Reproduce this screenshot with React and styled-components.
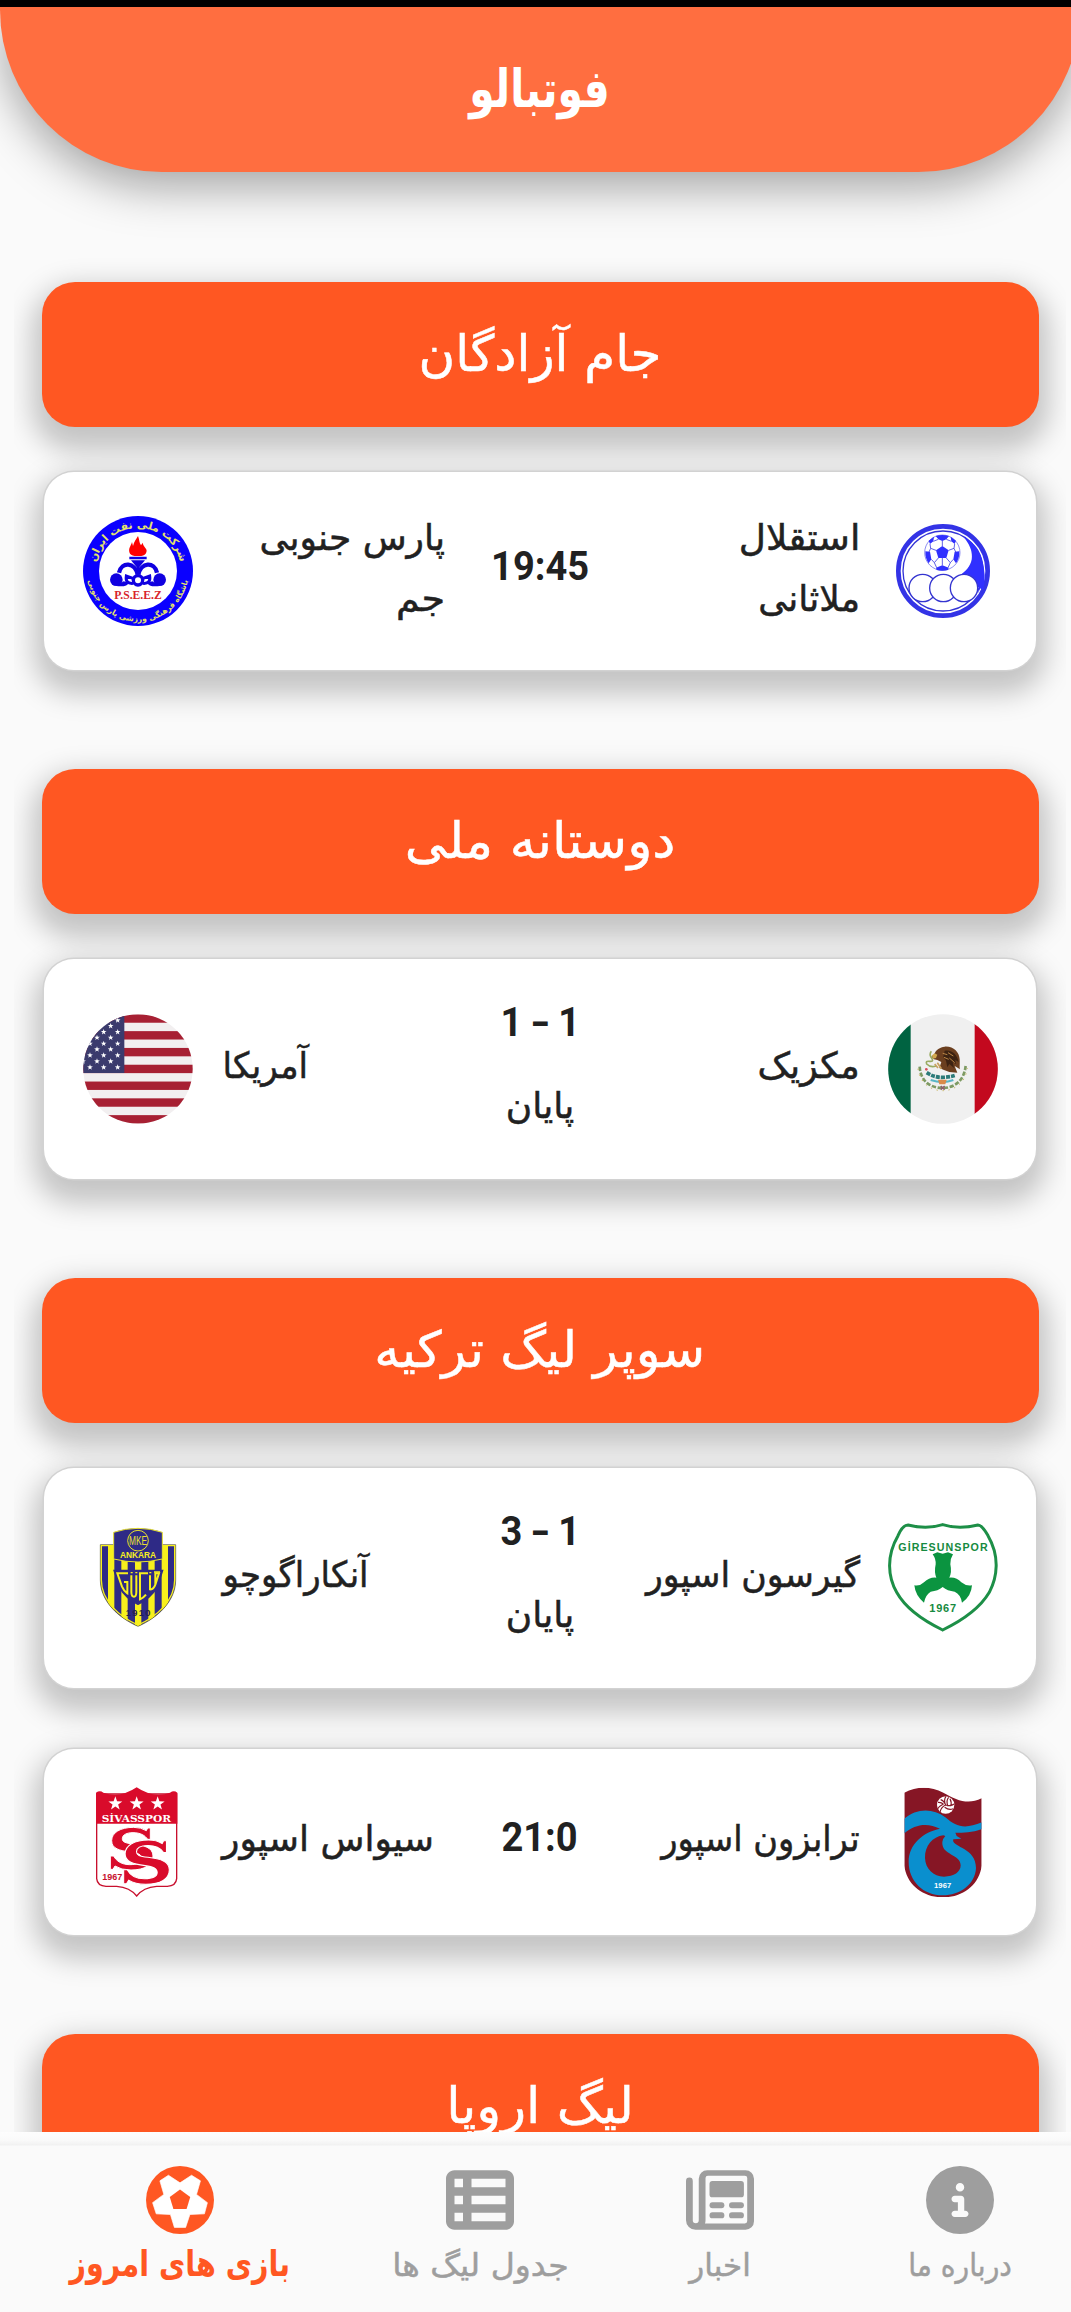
import React from "react";
import styled, { createGlobalStyle } from "styled-components";
import { FaTableList, FaCircleInfo } from "react-icons/fa6";

const persian = `"DejaVu Sans", "Noto Sans", sans-serif`;

const GlobalStyle = createGlobalStyle`
  html, body { margin: 0; padding: 0; background: #fafafa; overflow: hidden; }
  * { box-sizing: border-box; }
`;

const Viewport = styled.div`
  width: 1071px;
  height: 2312px;
  overflow: hidden;
  direction: ltr;
`;

const Screen = styled.div`
  width: 1080px;
  height: 2312px;
  display: grid;
  grid-template-rows: 7px 165px 1960px 180px;
  background: #fafafa;
  font-family: ${persian};
  color: #212121;
`;

const StatusBar = styled.div`
  background: #000;
`;

const AppBar = styled.header`
  position: relative;
  z-index: 1;
  display: flex;
  justify-content: center;
  align-items: center;
  border-radius: 0 0 162px 162px;
  background: #ff6e40;
  box-shadow: 0 16px 46px rgba(0, 0, 0, 0.34);
`;

const Label = styled.span`
  display: block;
  direction: rtl;
  white-space: nowrap;
  font-size: ${(p) => p.$size}px;
  font-weight: ${(p) => (p.$bold ? 700 : 400)};
  -webkit-text-stroke: ${(p) => (p.$bold ? 0 : 0.5)}px currentColor;
  line-height: ${(p) => p.$line || 1.5};
  color: ${(p) => p.$color || "inherit"};
  transform: translateY(${(p) => p.$drop || 0}px) scaleX(${(p) => p.$stretch || 1});
  transform-origin: ${(p) => p.$origin || "center"};
`;

const Matches = styled.main`
  width: 1052px;
  margin-left: 14px;
  padding: 109.5px 27.5px 0 27.5px;
  overflow: hidden;
  display: flex;
  flex-direction: column;
  gap: 99px;
`;

const League = styled.section`
  display: flex;
  flex-direction: column;
  flex: none;
`;

const cardShadow = `0 14px 28px 10px rgba(0, 0, 0, 0.22)`;

const LeagueTitle = styled.h2`
  margin: 0 0 44.5px;
  height: 145.5px;
  display: flex;
  align-items: center;
  justify-content: center;
  border-radius: 33px;
  background: #ff5722;
  color: #fff;
  font-weight: 400;
  box-shadow: ${cardShadow};
`;

const MatchList = styled.div`
  display: flex;
  flex-direction: column;
  gap: 61px;
  padding: 0 2.5px;
`;

const MatchCard = styled.article`
  height: ${(p) => p.$height}px;
  direction: rtl;
  display: grid;
  grid-template-columns: 110px 223px 1fr 223px 110px;
  column-gap: 28.5px;
  align-items: center;
  padding: 0 38px 0 39px;
  border-radius: 30px;
  background: #fff;
  box-shadow: 0 0 0 1.5px #d2d2d2, ${cardShadow};
`;

const Team = styled.div`
  display: flex;
  justify-content: ${(p) => p.$side};
  transform: translateX(0.5px);
`;

const Result = styled.div`
  display: flex;
  flex-direction: column;
  align-items: center;
  gap: ${(p) => (p.$finished ? 18 : 0)}px;
  transform: translate(-0.5px, ${(p) => (p.$finished ? -2.5 : 0)}px);
`;

const Score = styled.span`
  direction: ltr;
  white-space: nowrap;
  font-family: Roboto, sans-serif;
  font-weight: 700;
  font-size: 40px;
  line-height: 60px;
  transform: translateY(-4px) scaleX(0.95);
`;

const Dash = styled.span`
  display: inline-block;
  margin: 0 11px;
  transform: scaleX(1.4);
`;

const Nav = styled.nav`
  display: flex;
  direction: ltr;
  padding-top: 13px;
  background: linear-gradient(#fdfdfd 0, #fafafa 8px, #f1f1f1 13px, #fafafa 14px);
`;

const NavItem = styled.a`
  flex: ${(p) => (p.$active ? 1.5 : 1)} 1 0;
  display: flex;
  flex-direction: column;
  align-items: center;
  padding-top: 21px;
  color: ${(p) => (p.$active ? "#ff5722" : "#9e9e9e")};
  svg { display: block; width: 68px; height: 68px; flex: none; }
`;

const Crest = styled.svg`
  display: block;
  width: 110px;
  height: 110px;
`;

const star = (cx, cy, r) =>
  Array.from({ length: 10 }, (_, i) => {
    const a = (-90 + i * 36) * (Math.PI / 180);
    const q = i % 2 ? r * 0.4 : r;
    return `${(cx + q * Math.cos(a)).toFixed(1)},${(cy + q * Math.sin(a)).toFixed(1)}`;
  }).join(" ");

function FutbolIcon() {
  return (
    <svg viewBox="257 107 206 206">
      <circle cx="360" cy="210" r="103" fill="currentColor" />
      <path fill="#fff" stroke="#fff" strokeWidth="2" strokeLinejoin="round" d="M325 135L360 158L395 135L422 152L410 193L443 218L434 252L390 254L377 293L343 293L331 254L288 252L277 218L311 193L299 152Z" />
      <path fill="currentColor" d="M360 178L391 201L380 237H340L329 201Z" />
    </svg>
  );
}

function NewspaperIcon() {
  return (
    <svg viewBox="0 0 512 512" fill="currentColor">
      <path fillRule="evenodd" d="M160 32H448A64 64 0 0 1 512 96V416A64 64 0 0 1 448 480H72A72 72 0 0 1 0 408V113A25 25 0 0 1 51 113V408A22 22 0 0 0 96 408V96A64 64 0 0 1 160 32ZM165 73A18 18 0 0 0 147 91V408Q147 421 143 432H443A18 18 0 0 0 461 414V91A18 18 0 0 0 443 73Z" />
      <rect x="177" y="113" width="259" height="123" rx="22" />
      <rect x="177" y="273" width="112" height="45" rx="22" />
      <rect x="324" y="273" width="112" height="45" rx="22" />
      <rect x="177" y="349" width="112" height="45" rx="22" />
      <rect x="324" y="349" width="112" height="45" rx="22" />
    </svg>
  );
}

function Esteghlal() {
  return (
    <Crest viewBox="0 0 330 330">
      <circle cx="165" cy="165" r="134" fill="#fff" stroke="#3333e6" strokeWidth="14" />
      <circle cx="165" cy="165" r="120" fill="#fff" stroke="#3333d6" strokeWidth="4" />
      <path fill="#3030ff" d="M226 62C258 94 266 150 218 178L214 184L286 222Q296 180 282 128C272 94 250 74 226 62ZM226 62C262 104 262 146 218 176Q250 174 266 194Q276 206 270 232Q286 204 286 160C284 110 256 74 226 62Z" />
      <path fill="#fff" d="M222 70C256 104 258 148 218 174L200 176V70Z" />
      <g>
        <circle cx="163" cy="110" r="53" fill="#fff" stroke="#5555e8" strokeWidth="2" />
        <path fill="#3030ff" d="M163 90L182 103L175 126H151L144 103Z" />
        <path fill="#3030ff" d="M143 60Q163 54 183 60L175 70L163 75L151 70ZM112 106L126 107L130 130L122 142Q111 126 112 106ZM214 106L200 107L196 130L204 142Q215 126 214 106ZM144 155L163 148L182 155L180 162Q163 166 146 162ZM122 74L138 62L136 76L126 84ZM204 74L188 62L190 76L200 84Z" />
        <path fill="none" stroke="#4040e0" strokeWidth="2.5" d="M163 90V75M182 103L198 97M175 126L187 140M151 126L139 140M144 103L128 97M126 84L128 97L122 110M200 84L198 97L204 110M130 130L139 140L146 155M196 130L187 140L180 155M163 126V148M136 76L151 70M190 76L175 70" />
      </g>
      <g fill="#fff" stroke="#3434d0" strokeWidth="4">
        <circle cx="104" cy="216" r="41" />
        <circle cx="166" cy="216" r="41" />
        <circle cx="228" cy="216" r="41" />
      </g>
    </Crest>
  );
}

function Pseez() {
  return (
    <Crest viewBox="0 0 330 330">
      <defs>
        <path id="ring-top" d="M36 165A129 129 0 0 1 294 165" />
        <path id="ring-bottom" d="M13 165A152 152 0 0 0 317 165" />
      </defs>
      <circle cx="165" cy="165" r="165" fill="#0a00ff" />
      <circle cx="165" cy="165" r="117" fill="#fff" />
      <g fill="#e6e36a" fontFamily={persian} fontWeight="700" textAnchor="middle" direction="rtl">
        <text fontSize="32"><textPath href="#ring-top" startOffset="50%">شرکت ملی نفت ایران</textPath></text>
        <text fontSize="23"><textPath href="#ring-bottom" startOffset="50%">باشگاه فرهنگی ورزشی پارس جنوبی</textPath></text>
      </g>
      <path fill="#f00" d="M141 113C134 98 144 90 147 78L150 90C153 76 160 70 165 60C170 72 168 80 174 88L179 80C180 94 198 98 188 113Q182 121 165 120Q148 121 141 113Z" />
      <path fill="#1000e0" d="M139 122H191V130H139ZM144 133H186L170 152V162H160V152Z" />
      <g fill="none" stroke="#1000e0" strokeWidth="13">
        <path d="M164 176C156 138 116 136 108 170" />
        <path d="M166 176C174 138 214 136 222 170" />
        <circle cx="165" cy="193" r="14" strokeWidth="10" />
        <path d="M178 188L200 180Q204 204 180 202M152 188L130 180Q126 204 150 202" strokeWidth="9" />
      </g>
      <circle cx="100" cy="191" r="19" fill="#1000e0" />
      <circle cx="230" cy="191" r="19" fill="#1000e0" />
      <path fill="#1000e0" d="M100 210Q132 214 138 200L122 196ZM230 210Q198 214 192 200L208 196Z" />
      <text x="165" y="248" textAnchor="middle" fontFamily="Liberation Serif, serif" fontWeight="700" fontSize="36" textLength="142" lengthAdjust="spacingAndGlyphs" fill="#d8232a">P.S.E.E.Z</text>
    </Crest>
  );
}

function Mexico() {
  return (
    <Crest viewBox="84 100 330 330">
      <clipPath id="mx"><circle cx="249" cy="265" r="164.5" /></clipPath>
      <g clipPath="url(#mx)">
        <path fill="#f0f0f0" d="M84 100H414V430H84Z" />
        <path fill="#006341" d="M84 100H152V430H84Z" />
        <path fill="#c3091e" d="M344 100H414V430H344Z" />
      </g>
      <path fill="none" stroke="#7d9a63" strokeWidth="8" strokeDasharray="13 5" d="M179 258C182 305 215 322 248 322C282 322 312 302 317 256" />
      <path fill="none" stroke="#c9b560" strokeWidth="3" strokeDasharray="4 14" d="M174 264C180 310 215 330 248 330C282 330 316 308 322 262" />
      <path fill="#6b3f1f" d="M222 222C228 206 240 200 254 198C280 196 298 214 299 236C300 252 298 260 300 266L284 256L292 276L268 274L252 268L238 262L244 244L232 238L222 236L214 228Z" />
      <path fill="#3d2312" d="M254 210C276 206 292 222 296 244L286 238L288 250L278 244L282 262L268 250L262 260L258 240L250 228Z" />
      <path fill="none" stroke="#b98545" strokeWidth="3" d="M248 218L262 222M252 230L266 236M264 216L280 226M268 232L284 246" />
      <path fill="#d2a94e" d="M216 224L224 218L232 222L228 232L218 234Z" />
      <path fill="none" stroke="#9aab62" strokeWidth="5" d="M214 212Q206 222 216 234Q222 244 208 242Q196 240 200 250Q212 262 228 256" />
      <path fill="none" stroke="#c9a15e" strokeWidth="5" d="M224 250L234 262M232 246L244 264" />
      <path fill="none" stroke="#2b7a78" strokeWidth="11" strokeDasharray="12 3" d="M200 276Q222 290 246 290Q268 290 286 284" />
      <path fill="none" stroke="#58b6c6" strokeWidth="7" d="M212 298Q230 304 248 304Q264 304 280 298" />
      <path fill="#d98a4a" d="M234 297H260L256 311H238Z" />
      <path fill="none" stroke="#8c5f6a" strokeWidth="5" d="M242 316L254 327M254 316L242 327" />
      <circle cx="199" cy="266" r="4" fill="#d64d5a" />
    </Crest>
  );
}

function Usa() {
  const stripe = 25.2;
  return (
    <Crest viewBox="68 100 330 330">
      <clipPath id="us"><circle cx="233" cy="265" r="164" /></clipPath>
      <g clipPath="url(#us)">
        <path fill="#f2eff0" d="M68 100H398V430H68Z" />
        {Array.from({ length: 7 }, (_, i) => (
          <rect key={i} x="68" y={101 + i * 2 * stripe} width="330" height={stripe} fill="#a72033" />
        ))}
        <path fill="#3b3b6d" d="M68 100H192V277H68Z" />
        {[119, 154, 189, 224, 260].flatMap((y) =>
          [89, 130, 172].map((x) => <polygon key={`${x}-${y}`} points={star(x, y, 9)} fill="#fff" />)
        )}
        {[136, 171, 206, 242].flatMap((y) =>
          [68, 110, 151].map((x) => <polygon key={`${x}-${y}`} points={star(x, y, 9)} fill="#fff" />)
        )}
      </g>
    </Crest>
  );
}

function Giresun() {
  return (
    <Crest viewBox="84 100 330 330">
      <path fill="#fff" stroke="#1d8f47" strokeWidth="9" d="M144 106Q200 120 248 105Q296 120 354 106C366 106 376 124 384 138C420 200 412 262 388 308C356 362 300 396 248 421C196 396 140 362 110 308C84 262 78 200 114 138C120 124 132 106 144 106Z" />
      <text x="249" y="183" textAnchor="middle" fontFamily="Liberation Sans, Arial, sans-serif" fontWeight="700" fontSize="32" textLength="268" fill="#168a40">GİRESUNSPOR</text>
      <path fill="#0b9440" d="M218 194L232 188L248 192L264 188L279 194Q270 208 271 224Q276 248 268 264Q290 262 304 278Q318 290 336 287Q334 320 306 339Q302 314 284 306Q262 304 248 292Q234 304 212 306Q196 316 192 339Q166 318 163 287Q180 290 192 278Q208 262 229 264Q222 248 227 224Q228 208 218 194Z" />
      <text x="248" y="367" textAnchor="middle" fontFamily="Liberation Sans, Arial, sans-serif" fontWeight="700" fontSize="33" textLength="80" fill="#168a40">1967</text>
    </Crest>
  );
}

function Ankara() {
  return (
    <Crest viewBox="69 99 330 330">
      <clipPath id="ank"><path d="M121 164H347V270C347 334 292 384 234 409C176 384 121 334 121 270Z" /></clipPath>
      <g clipPath="url(#ank)">
        <path fill="#2e2a86" d="M120 110H348V410H120Z" />
        {[144, 184, 225, 265, 305].map((x) => (
          <rect key={x} x={x} y="164" width="19" height="250" fill="#f7f01c" />
        ))}
      </g>
      <path fill="none" stroke="#55522a" strokeWidth="2" d="M121 164H347V270C347 334 292 384 234 409C176 384 121 334 121 270Z" />
      <path fill="none" stroke="#f7f01c" strokeWidth="4" d="M124 167H344V270C344 332 290 380 234 405C178 380 124 332 124 270Z" />
      <path fill="#2e2a86" stroke="#e8e22e" strokeWidth="3" d="M161 127Q196 115 234 115Q272 115 307 127V207Q270 216 234 216Q198 216 161 207Z" />
      <circle cx="234" cy="152" r="31" fill="none" stroke="#e8e22e" strokeWidth="3" />
      <text x="234" y="166" textAnchor="middle" fontFamily="Liberation Sans, Arial, sans-serif" fontSize="38" textLength="54" lengthAdjust="spacingAndGlyphs" fill="#e8e22e">MKE</text>
      <text x="234" y="205" textAnchor="middle" fontFamily="Liberation Sans, Arial, sans-serif" fontWeight="700" fontSize="29" textLength="108" lengthAdjust="spacingAndGlyphs" fill="#f7f01c">ANKARA</text>
      <path fill="#2e2a86" stroke="#2e2a86" strokeWidth="4" d="M162 241H308L292 292Q270 326 234 343Q198 326 178 292Z" />
      <path fill="none" stroke="#f7f01c" strokeWidth="6" d="M204 250H172L186 290Q192 304 202 310V276H192M214 256V306Q214 320 222 320Q229 320 229 306V256M264 250H240V328Q250 324 258 314M270 256V298Q280 300 286 284L297 250H286V284" />
      <path fill="none" stroke="#f7f01c" strokeWidth="4" d="M212 248H218M226 248H232M268 248H274M282 246H300" />
      <text x="234" y="379" textAnchor="middle" fontFamily="Liberation Sans, Arial, sans-serif" fontWeight="700" fontSize="28" textLength="74" fill="#25204f">1910</text>
    </Crest>
  );
}

function Trabzon() {
  return (
    <Crest viewBox="84 109 330 330">
      <clipPath id="tra"><path d="M133 126C170 106 212 106 250 126C290 148 322 164 365 143V345C358 404 306 440 249 440C192 440 140 404 133 345Z" /></clipPath>
      <g clipPath="url(#tra)">
        <path fill="#861625" d="M130 100H370V442H130Z" />
        <path fill="#0a8fce" d="M130 207C168 172 218 172 256 200C290 230 316 236 368 214V234C336 246 312 246 286 246L290 256L304 264L280 266C272 290 348 288 348 352C346 400 300 434 248 434C190 434 146 392 146 334C146 280 190 244 240 234C204 216 166 218 130 250Z" />
        <path fill="#861625" d="M250 254C218 258 194 286 195 322C196 354 220 378 252 378C282 378 302 364 302 344C302 310 244 314 247 274Q248 264 256 256Z" />
      </g>
      <circle cx="257" cy="163" r="26" fill="#fff" />
      <path fill="none" stroke="#861625" strokeWidth="3.5" d="M257 163Q250 148 258 137M263 166Q258 148 266 140M257 163Q274 168 282 160M254 170Q268 180 279 174M257 163Q244 168 240 184M249 161Q236 168 233 174M242 147Q252 150 257 163M234 155Q244 154 251 161M270 144Q276 156 272 166" />
      <text x="248" y="413" textAnchor="middle" fontFamily="Liberation Sans, Arial, sans-serif" fontWeight="700" fontSize="23" textLength="52" fill="#fff">1967</text>
    </Crest>
  );
}

function Sivas() {
  const ess = "M120 34V0H112L108 8Q92 -2 70 -2C30 -2 4 14 4 38C4 62 28 68 60 72C84 75 94 80 94 92C94 104 80 110 58 110C36 110 18 100 10 84H0V124H8L14 114Q32 126 62 126C104 126 128 110 128 84C128 58 100 52 68 48C44 45 36 42 36 32C36 20 50 14 68 14C90 14 104 22 112 34Z";
  return (
    <Crest viewBox="69 109 330 330">
      <path fill="#fff" stroke="#c8102e" strokeWidth="4" d="M110 130H350V384Q348 406 322 407H290Q250 410 230 436Q210 410 170 407H138Q112 406 110 384Z" />
      <path fill="#d90b2b" d="M108 126Q120 118 130 126Q180 144 230 110Q280 144 330 126Q342 118 352 126V219H108Z" />
      {[166, 230, 293].map((x) => <polygon key={x} points={star(x, 159, 22)} fill="#fff" />)}
      <text x="229" y="214" textAnchor="middle" fontFamily="DejaVu Serif, serif" fontWeight="700" fontSize="30" textLength="208" lengthAdjust="spacingAndGlyphs" fill="#fff">SİVASSPOR</text>
      <g fill="#d90b2b" stroke="#fff" strokeWidth="3">
        <path transform="translate(151 232)" d={ess} />
        <path transform="translate(191 270) scale(1.07 1.04)" d={ess} />
      </g>
      <text x="157" y="388" textAnchor="middle" fontFamily="Liberation Sans, Arial, sans-serif" fontWeight="700" fontSize="29" textLength="60" lengthAdjust="spacingAndGlyphs" fill="#c8102e">1967</text>
    </Crest>
  );
}

const leagues = [
  {
    title: "جام آزادگان",
    stretch: 1,
    matches: [
      { height: 198, home: [["استقلال", 1.04], ["ملاثانی", 1]], away: [["پارس جنوبی", 1], ["جم", 1.06]], score: ["19:45"], HomeCrest: Esteghlal, AwayCrest: Pseez },
    ],
  },
  {
    title: "دوستانه ملی",
    stretch: 1.04,
    matches: [
      { height: 220, home: [["مکزیک", 1.01]], away: [["آمریکا", 0.95]], score: ["1", "1"], status: "پایان", HomeCrest: Mexico, AwayCrest: Usa },
    ],
  },
  {
    title: "سوپر لیگ ترکیه",
    stretch: 1.023,
    matches: [
      { height: 220, home: [["گیرسون اسپور", 0.966]], away: [["آنکاراگوچو", 0.943]], score: ["3", "1"], status: "پایان", HomeCrest: Giresun, AwayCrest: Ankara },
      { height: 186, home: [["ترابزون اسپور", 0.935]], away: [["سیواس اسپور", 1]], score: ["21:0"], HomeCrest: Trabzon, AwayCrest: Sivas },
    ],
  },
  { title: "لیگ اروپا", stretch: 1.03, matches: [] },
];

const tabs = [
  { label: "بازی های امروز", Icon: FutbolIcon, active: true, stretch: 0.795 },
  { label: "جدول لیگ ها", Icon: FaTableList, stretch: 1.07 },
  { label: "اخبار", Icon: NewspaperIcon, stretch: 1 },
  { label: "درباره ما", Icon: FaCircleInfo, stretch: 0.91 },
];

function TeamName({ lines, away }) {
  const wrapped = lines.length > 1;
  return (
    <Team $side={away && !wrapped ? "flex-end" : "flex-start"}>
      <div>
        {lines.map(([line, stretch]) => (
          <Label key={line} $size={36} $line="61px" $drop={-3} $stretch={stretch} $origin={away && !wrapped ? "left" : "right"}>
            {line}
          </Label>
        ))}
      </div>
    </Team>
  );
}

function Match({ height, home, away, score, status, HomeCrest, AwayCrest }) {
  return (
    <MatchCard $height={height}>
      <HomeCrest />
      <TeamName lines={home} />
      <Result $finished={!!status}>
        <Score>
          {score[0]}
          {score[1] && <><Dash>-</Dash>{score[1]}</>}
        </Score>
        {status && <Label $size={36} $line="61px">{status}</Label>}
      </Result>
      <TeamName lines={away} away />
      <AwayCrest />
    </MatchCard>
  );
}

export default function App() {
  return (
    <Viewport>
      <GlobalStyle />
      <Screen>
        <StatusBar />
        <AppBar>
          <Label $size={52} $bold $color="#fff" $drop={-1} $stretch={0.785}>فوتبالو</Label>
        </AppBar>
        <Matches>
          {leagues.map(({ title, stretch, matches }) => (
            <League key={title}>
              <LeagueTitle><Label $size={50} $stretch={stretch}>{title}</Label></LeagueTitle>
              <MatchList>
                {matches.map((m) => <Match key={m.height} {...m} />)}
              </MatchList>
            </League>
          ))}
        </Matches>
        <Nav>
          {tabs.map(({ label, Icon, active, stretch }) => (
            <NavItem key={label} $active={active}>
              <Icon />
              <Label $size={active ? 36 : 31} $bold={active} $drop={active ? 3 : 8} $stretch={stretch}>{label}</Label>
            </NavItem>
          ))}
        </Nav>
      </Screen>
    </Viewport>
  );
}
